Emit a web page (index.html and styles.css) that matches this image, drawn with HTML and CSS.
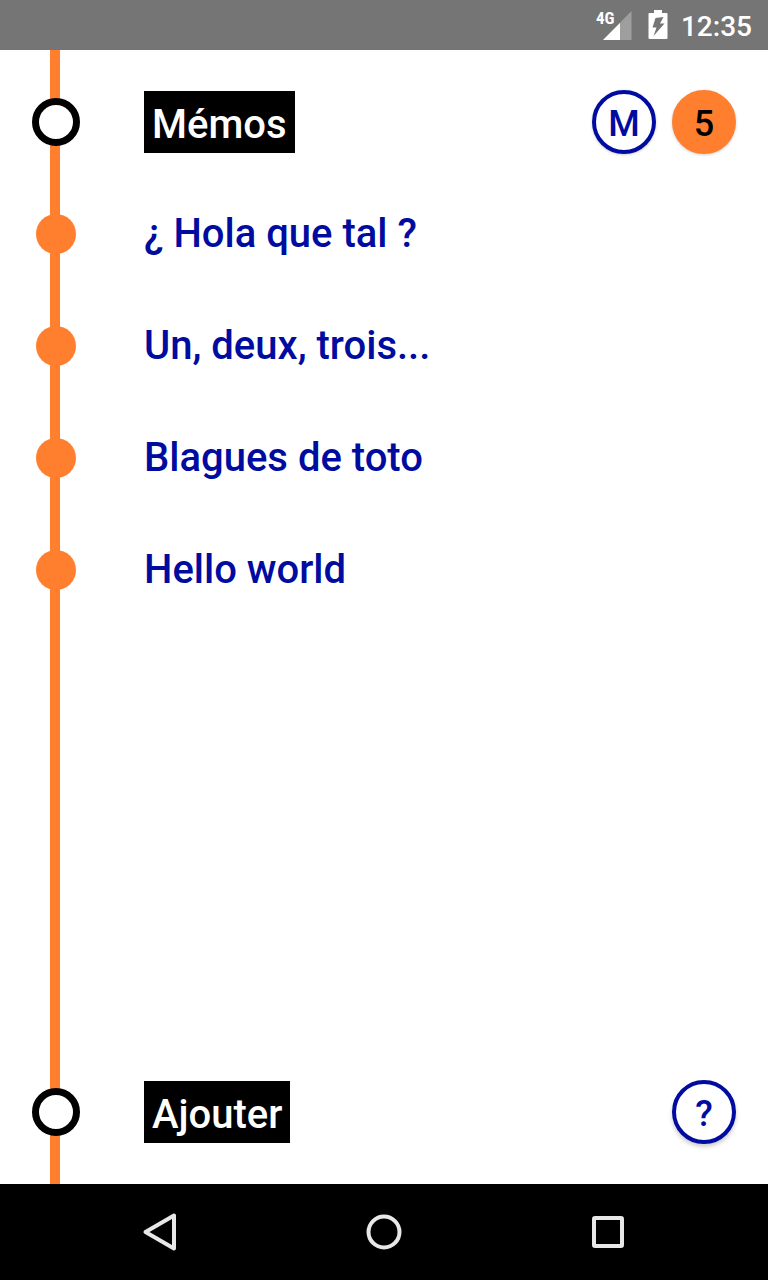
FILE: index.html
```html
<!DOCTYPE html>
<html lang="fr">
<head>
<meta charset="utf-8">
<meta name="viewport" content="width=device-width, initial-scale=1">
<title>Mémos</title>
<link rel="stylesheet" href="styles.css">
</head>
<body>
<div class="status-bar">
  <svg class="signal" width="36" height="32" viewBox="0 0 36 32" aria-hidden="true">
    <path d="M35.500 2V31H7Z" fill="#fff" fill-opacity=".3"/>
    <path d="M24 14V31H7Z" fill="#fff"/>
    <text class="network" x="0" y="15">4G</text>
  </svg>
  <svg class="battery" width="20" height="30" viewBox="0 0 20 30" aria-hidden="true">
    <path fill="#fff" fill-rule="evenodd" d="M6 0H14V3H18.500Q19.500 3 19.500 4V28Q19.500 29 18.500 29H1.500Q.5 29 .5 28V4Q.5 3 1.500 3H6ZM15.500 7 7.500 8 4.500 17.500H8.500L5.500 26 16.500 13.500H12Z"/>
  </svg>
  <time class="clock">12:35</time>
</div>
<main class="line-map">
  <header class="stop">
    <span class="rail"><span class="terminus"></span></span>
    <h1 class="plate">Mémos</h1>
    <div class="actions">
      <button class="badge" type="button">M</button>
      <button class="badge badge-line" type="button">5</button>
    </div>
  </header>
  <ul class="memos">
    <li class="stop"><span class="rail"><span class="station"></span></span><a class="memo" href="#hola">¿ Hola que tal ?</a></li>
    <li class="stop"><span class="rail"><span class="station"></span></span><a class="memo" href="#trois">Un, deux, trois...</a></li>
    <li class="stop"><span class="rail"><span class="station"></span></span><a class="memo" href="#toto">Blagues de toto</a></li>
    <li class="stop"><span class="rail"><span class="station"></span></span><a class="memo" href="#world">Hello world</a></li>
  </ul>
  <footer class="stop">
    <span class="rail"><span class="terminus"></span></span>
    <button class="plate" type="button">Ajouter</button>
    <div class="actions">
      <button class="badge badge-help" type="button" aria-label="Aide">?</button>
    </div>
  </footer>
</main>
<nav class="nav-bar">
  <button class="nav-key" type="button" aria-label="Retour">
    <svg width="48" height="48" viewBox="0 0 48 48"><path d="M38 7.500V40.500L9.500 24Z"/></svg>
  </button>
  <button class="nav-key" type="button" aria-label="Accueil">
    <svg width="48" height="48" viewBox="0 0 48 48"><circle cx="24" cy="24" r="15.500"/></svg>
  </button>
  <button class="nav-key" type="button" aria-label="Applications récentes">
    <svg width="48" height="48" viewBox="0 0 48 48"><rect x="10" y="10" width="28" height="28" rx="1"/></svg>
  </button>
</nav>
</body>
</html>
```
FILE: styles.css
```css
:root {
  --orange: #ff7f2e;
  --blue: #000b9f;
}

* {
  box-sizing: border-box;
}

body {
  margin: 0;
  min-height: 100vh;
  display: flex;
  flex-direction: column;
  background: #fff;
  font-family: Roboto, "Liberation Sans", sans-serif;
  font-weight: 500;
}

button {
  border: 0;
  margin: 0;
  font: inherit;
  cursor: pointer;
}

.status-bar {
  display: flex;
  justify-content: flex-end;
  align-items: center;
  height: 50px;
  padding-right: 16px;
  background: #757575;
  color: #fff;
}

.signal {
  margin-right: 16px;
}

.network {
  font: 700 17px "Roboto Condensed", Roboto, sans-serif;
  fill: #fff;
}

.battery {
  margin-right: 13px;
}

.clock {
  padding-top: 4px;
  font-size: 28px;
  line-height: 32px;
}

.line-map {
  flex: 1;
  display: flex;
  flex-direction: column;
  padding: 16px 0;
  background: linear-gradient(var(--orange), var(--orange)) 50px 0 / 10px 100% no-repeat;
}

.stop {
  display: flex;
  align-items: center;
  height: 112px;
  padding-right: 32px;
}

.rail {
  display: flex;
  justify-content: center;
  width: 112px;
  margin-right: 32px;
}

.terminus {
  width: 48px;
  height: 48px;
  border: 7px solid #000;
  border-radius: 50%;
  background: #fff;
}

.station {
  width: 40px;
  height: 40px;
  border-radius: 50%;
  background: var(--orange);
}

.plate {
  margin: 0;
  padding: 10px 8px 4px;
  background: #000;
  color: #fff;
  font-size: 40px;
  font-weight: 500;
  line-height: 48px;
}

.actions {
  display: flex;
  gap: 16px;
  margin-left: auto;
}

.badge {
  width: 64px;
  height: 64px;
  padding: 4px 0 0;
  border: 4px solid var(--blue);
  border-radius: 50%;
  background: #fff;
  color: var(--blue);
  font-size: 36px;
  line-height: 48px;
  box-shadow: 0 1px 3px rgba(0, 0, 0, .2);
}

.badge-line {
  border-color: var(--orange);
  background: var(--orange);
  color: #000;
}

.badge-help {
  box-shadow: 0 3px 4px rgba(0, 0, 0, .2);
}

.memos {
  flex: 1;
  margin: 0;
  padding: 0;
  list-style: none;
}

.memo {
  color: var(--blue);
  font-size: 40px;
  line-height: 48px;
  text-decoration: none;
}

.nav-bar {
  display: flex;
  justify-content: center;
  align-items: center;
  gap: 32px;
  height: 96px;
  background: #000;
}

.nav-key {
  display: flex;
  justify-content: center;
  align-items: center;
  width: 192px;
  height: 96px;
  padding: 0;
  background: none;
}

.nav-key svg {
  fill: none;
  stroke: #e8e8e8;
  stroke-width: 4;
  stroke-linejoin: round;
}
```
